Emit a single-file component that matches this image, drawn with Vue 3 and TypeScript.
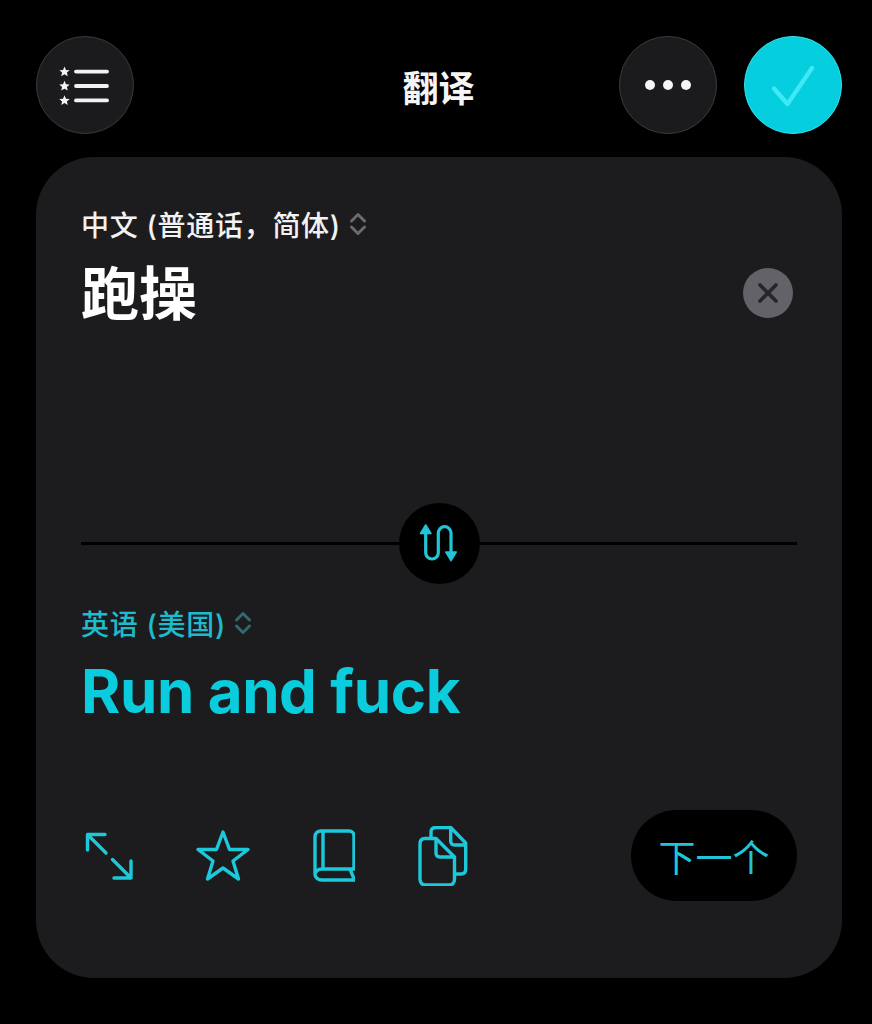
<script setup lang="ts">
const stars = [35.6, 50, 64.4]
</script>

<template>
  <div class="page">
    <header class="top">
      <button class="round round--dark">
        <svg width="98" height="98" viewBox="0 0 98 98">
          <g v-for="y in stars" :key="y">
            <path
              :transform="`translate(28.500 ${y})`"
              d="M0-5.2 1.5-1.7 5.2-1.4 2.4 1 3.3 4.6 0 2.7-3.3 4.6-2.4 1-5.2-1.4-1.5-1.7Z"
              fill="#f2f2f2"
            />
            <line x1="40" x2="71" :y1="y" :y2="y" stroke="#f2f2f2" stroke-width="3.8" stroke-linecap="round" />
          </g>
        </svg>
      </button>
      <h1 class="title">翻译</h1>
      <button class="round round--dark round--more">
        <span class="dot"></span><span class="dot"></span><span class="dot"></span>
      </button>
      <button class="round round--accent">
        <svg width="98" height="98" viewBox="0 0 98 98" fill="none">
          <path d="M30 52.500 43.500 68 68 32" stroke="#3ee8f6" stroke-width="4.4" stroke-linecap="round" stroke-linejoin="round" />
        </svg>
      </button>
    </header>

    <main class="card">
      <section class="pane pane--source">
        <div class="lang">
          <span>中文 (普通话，简体)</span>
          <svg class="updown" width="18" height="26" viewBox="0 0 18 26" fill="none">
            <path d="M2.500 10 9 3.500 15.500 10M2.500 16 9 22.500 15.500 16" stroke="#6b6b6e" stroke-width="3" stroke-linecap="round" stroke-linejoin="round" />
          </svg>
        </div>
        <div class="source-row">
          <p class="source-text">跑操</p>
          <button class="clear">
            <svg width="50" height="50" viewBox="0 0 50 50" fill="none">
              <path d="M17 17 33 33M33 17 17 33" stroke="#26262a" stroke-width="3.6" stroke-linecap="round" />
            </svg>
          </button>
        </div>
      </section>

      <div class="divider">
        <span class="divider__line"></span>
        <button class="swap">
          <svg width="81" height="81" viewBox="0 0 81 81" fill="none">
            <path d="M26.700 28V49.700A6.300 6.300 0 0 0 39.300 49.700V30A6.300 6.300 0 0 1 52 30V50" stroke="#1fc5d8" stroke-width="3.2" stroke-linecap="round" />
            <path d="M21.500 30.500 26.700 22 31.900 30.500ZM46.800 49 52 57.700 57.200 49Z" fill="#1fc5d8" stroke="#1fc5d8" stroke-width="1.6" stroke-linejoin="round" />
          </svg>
        </button>
        <span class="divider__line"></span>
      </div>

      <section class="pane pane--target">
        <div class="lang lang--target">
          <span>英语 (美国)</span>
          <svg class="updown" width="18" height="26" viewBox="0 0 18 26" fill="none">
            <path d="M2.500 10 9 3.500 15.500 10M2.500 16 9 22.500 15.500 16" stroke="#2f6a70" stroke-width="3" stroke-linecap="round" stroke-linejoin="round" />
          </svg>
        </div>
        <p class="target-text">Run and fuck</p>
      </section>

      <footer class="actions">
        <div class="icons">
          <svg width="48" height="48" viewBox="0 0 48 48" fill="none" class="ic">
            <path d="M2.500 18V2.500H20M3 3 21 21M27.500 27.500 45.500 45.500M46 29V46H29" />
          </svg>
          <svg width="56" height="54" viewBox="0 0 56 54" fill="none" class="ic">
            <path d="M28 3 34.500 20.500H53L38 32 43.500 50 28 39 12.500 50 18 32 3 20.500H21.500Z" />
          </svg>
          <svg width="42" height="54" viewBox="0 0 42 54" fill="none" class="ic">
            <path d="M2 44V8C2 4 4.500 2 8 2H36C39 2 41 4 41 7V40H9C5 40 2 42.500 2 45.500 2 48.500 5 51 9 51H41.500L37 40M10 2V40" />
          </svg>
          <svg width="50" height="60" viewBox="0 0 50 60" fill="none" class="ic ic--copy">
            <path d="M13 12V6C13 3 15 1.500 18 1.500H32.700L47.700 17V43C47.700 46 46 48 43 48H37M32.700 1.500V15C32.700 17.500 34.500 19 37 19H47.700" />
            <path d="M2 18C2 14.500 4 12.500 7 12.500H18L36.500 31V53C36.500 56.500 34.500 59 31 59H7.500C4 59 2 56.500 2 53ZM18 12.500V27C18 29.500 19.500 31 22 31H36.500" />
          </svg>
        </div>
        <button class="next">下一个</button>
      </footer>
    </main>
  </div>
</template>

<style>
html,
body {
  margin: 0;
  background: #000;
}
</style>

<style scoped>
.page {
  width: 872px;
  height: 1024px;
  box-sizing: border-box;
  padding: 36px 30px 46px 36px;
  background: #000;
  display: flex;
  flex-direction: column;
  gap: 23px;
  font-family: Inter, "Noto Sans CJK SC", sans-serif;
  overflow: hidden;
}

button {
  padding: 0;
  border: none;
  font-family: inherit;
  cursor: pointer;
}

.top {
  display: flex;
  align-items: center;
  height: 98px;
}

.round {
  width: 98px;
  height: 98px;
  flex: none;
  border-radius: 50%;
  box-sizing: border-box;
  display: flex;
  align-items: center;
  justify-content: center;
}

.round svg {
  flex: none;
}

.round--dark {
  background: #1b1b1d;
  border: 1.5px solid #3a3a3c;
}

.round--more {
  gap: 8px;
  margin-right: 27px;
}

.round--accent {
  background: #05cede;
  border: 1.5px solid #35e2ee;
}

.dot {
  width: 10px;
  height: 10px;
  border-radius: 50%;
  background: #f5f5f5;
}

.title {
  flex: 1;
  margin: 0;
  padding: 2px 0 0 124px;
  text-align: center;
  font-size: 36px;
  font-weight: 700;
  color: #f5f5f5;
}

.card {
  width: 806px;
  height: 821px;
  box-sizing: border-box;
  padding: 48px 45px 0;
  border-radius: 58px;
  background: #1c1c1e;
  display: flex;
  flex-direction: column;
}

.pane--source {
  height: 298px;
}

.lang {
  display: flex;
  align-items: center;
  gap: 8px;
  height: 38px;
  font-size: 28px;
  letter-spacing: 0.7px;
  font-weight: 500;
  color: #f2f2f2;
}

.lang--target {
  color: #1dbccd;
}

.source-row {
  display: flex;
  align-items: center;
  justify-content: space-between;
  margin-top: 18px;
  padding-right: 4px;
}

.source-text {
  margin: 0;
  font-size: 58px;
  line-height: 66px;
  font-weight: 700;
  color: #fff;
}

.clear {
  width: 50px;
  height: 50px;
  margin-top: -2px;
  border-radius: 50%;
  background: #636268;
  display: flex;
}

.divider {
  display: flex;
  align-items: center;
  height: 81px;
}

.divider__line {
  flex: 1;
  height: 3px;
  background: #000;
}

.swap {
  width: 81px;
  height: 81px;
  border-radius: 50%;
  background: #000;
  display: flex;
}

.pane--target {
  margin-top: 20px;
  height: 206px;
}

.target-text {
  margin: 13px 0 0;
  font-size: 60px;
  line-height: 72px;
  font-weight: 700;
  letter-spacing: -0.4px;
  color: #0accdd;
}

.actions {
  display: flex;
  align-items: center;
  justify-content: space-between;
  height: 91px;
}

.icons {
  display: flex;
  align-items: center;
  gap: 62px;
  padding-left: 4px;
}

.ic--copy {
  margin-left: 1px;
}

.ic path {
  stroke: #1cc8da;
  stroke-width: 3.4;
  stroke-linecap: round;
  stroke-linejoin: round;
}

.next {
  width: 166px;
  height: 91px;
  border-radius: 46px;
  background: #000;
  color: #1fc5d8;
  font-size: 37px;
  font-weight: 400;
}
</style>
